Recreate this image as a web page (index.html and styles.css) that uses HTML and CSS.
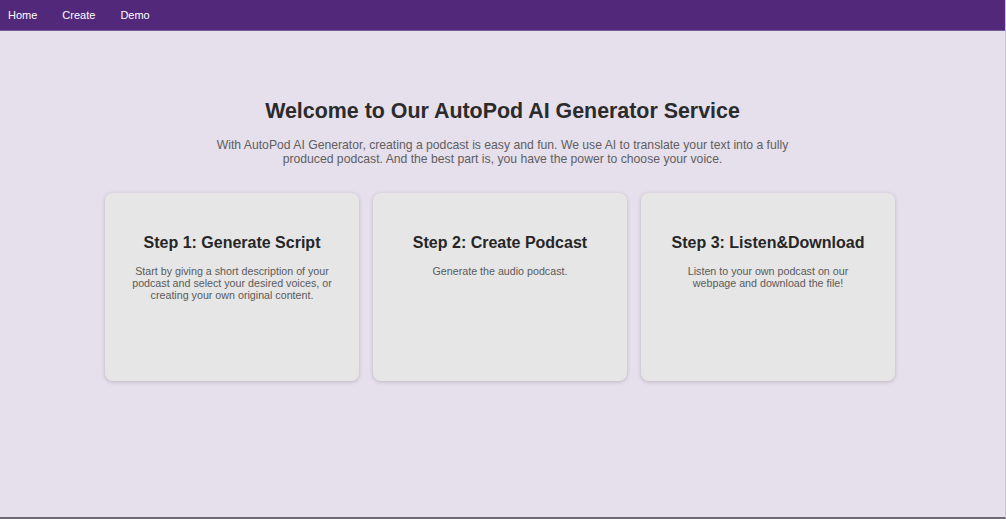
FILE: index.html
```html
<!DOCTYPE html>
<html>
<head>
<meta charset="utf-8">
<link rel="stylesheet" href="styles.css">
</head>
<body>
<div class="page">
  <nav class="nav">
    <a class="nav-link" href="#">Home</a>
    <a class="nav-link" href="#">Create</a>
    <a class="nav-link" href="#">Demo</a>
  </nav>
  <main class="main">
    <h1 class="title">Welcome to Our AutoPod AI Generator Service</h1>
    <p class="intro">With AutoPod AI Generator, creating a podcast is easy and fun. We use AI to translate your text into a fully produced podcast. And the best part is, you have the power to choose your voice.</p>
    <div class="cards">
      <div class="card">
        <h2 class="card-title">Step 1: Generate Script</h2>
        <p class="card-text">Start by giving a short description of your podcast and select your desired voices, or creating your own original content.</p>
      </div>
      <div class="card">
        <h2 class="card-title">Step 2: Create Podcast</h2>
        <p class="card-text">Generate the audio podcast.</p>
      </div>
      <div class="card">
        <h2 class="card-title">Step 3: Listen&amp;Download</h2>
        <p class="card-text">Listen to your own podcast on our webpage and download the file!</p>
      </div>
    </div>
  </main>
</div>
</body>
</html>
```
FILE: styles.css
```css
* { box-sizing: border-box; }
html, body { margin: 0; padding: 0; }
body {
  font-family: "Liberation Sans", Arial, sans-serif;
  background: #e6dfec;
}
.page {
  height: 519px;
  display: flex;
  flex-direction: column;
  border-bottom: 2px solid #6e6a73;
  border-right: 1px solid #c9c3ce;
}
.nav {
  height: 31px;
  background: #52287a;
  display: flex;
  align-items: center;
  padding-left: 8px;
  border-bottom: 1px solid #7a5a98;
}
.nav-link {
  color: #ffffff;
  text-decoration: none;
  font-size: 11px;
  margin-right: 25px;
}
.main {
  flex: 1;
  display: flex;
  flex-direction: column;
  align-items: center;
  padding-top: 68px;
}
.title {
  margin: 0;
  font-size: 21.4px;
  font-weight: bold;
  color: #2b2b2b;
}
.intro {
  margin: 14px 0 0;
  width: 590px;
  text-align: center;
  font-size: 12.2px;
  line-height: 14px;
  color: #606060;
}
.cards {
  display: flex;
  gap: 14px;
  margin-top: 27px;
  margin-left: -5px;
}
.card {
  width: 254px;
  height: 188px;
  background: #e6e6e6;
  border-radius: 8px;
  box-shadow: 0 1px 4px rgba(0,0,0,0.18);
  display: flex;
  flex-direction: column;
  align-items: center;
  padding: 41px 20px 0;
  text-align: center;
}
.card-title {
  margin: 0;
  font-size: 16px;
  font-weight: bold;
  color: #262626;
}
.card-text {
  margin: 13px 0 0;
  max-width: 205px;
  font-size: 10.7px;
  line-height: 12px;
  color: #5a5a5a;
}
```
